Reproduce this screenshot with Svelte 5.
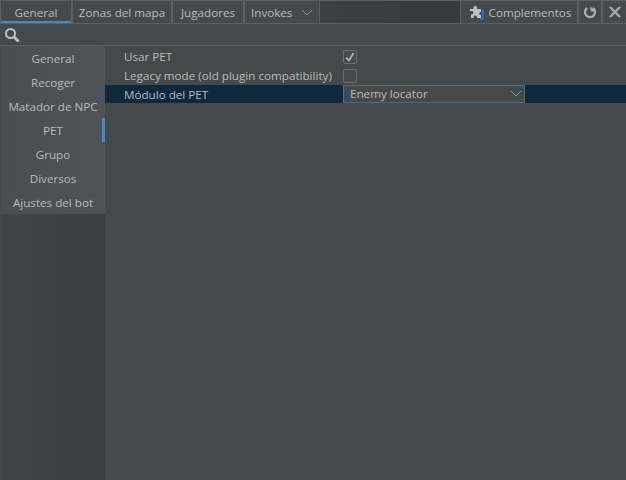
<script>
  const tabs = [
    { label: "General", width: 70, active: true },
    { label: "Zonas del mapa", width: 98 },
    { label: "Jugadores", width: 70 }
  ];
  const menu = ["General", "Recoger", "Matador de NPC", "PET", "Grupo", "Diversos", "Ajustes del bot"];
  const selected = "PET";
</script>

<div class="window">
  <header class="tabbar">
    {#each tabs as tab}
      <div class="tab" class:active={tab.active} style="width: {tab.width}px">{tab.label}</div>
    {/each}
    <div class="tab invokes">
      <span>Invokes</span>
      <svg width="12" height="7" viewBox="0 0 12 7"><path d="M1 1l5 5 5-5" fill="none" stroke="#8f9294" /></svg>
    </div>
    <div class="spacer"></div>
    <div class="tab plugins">
      <svg width="14" height="16" viewBox="0 0 14 16">
        <path d="M0 5h3.500V3.500a1.800 1.800 0 0 1 3.500 0V5h4v3H9.500v3H11v3H7v-1a1.800 1.800 0 0 0-3.500 0v1H1v-3.500h1a1.800 1.800 0 0 0 0-3.500H0z" fill="#bfc1c2" />
        <rect x="12" y="6" width="2" height="7" fill="#0a7cf0" />
        <rect x="10" y="14" width="4" height="2" fill="#0a7cf0" />
      </svg>
      <span>Complementos</span>
    </div>
    <div class="tab action refresh">
      <svg width="14" height="14" viewBox="0 0 14 14">
        <path d="M4.200 3a5 5 0 1 0 5.600 0" fill="none" stroke="#a9acad" stroke-width="2.300" />
        <path d="M7.500 1.500v5H12.500z" fill="#a9acad" />
      </svg>
    </div>
    <div class="tab action close">
      <svg width="12" height="12" viewBox="0 0 12 12"><path d="M1 1l10 10M11 1L1 11" stroke="#a9acad" stroke-width="2.200" /></svg>
    </div>
  </header>

  <div class="search">
    <svg width="16" height="16" viewBox="0 0 16 16">
      <circle cx="6.500" cy="6.500" r="4.500" fill="none" stroke="#bfc2c3" stroke-width="2" />
      <path d="M9.800 9.800l4.800 4.800" stroke="#bfc2c3" stroke-width="2.800" />
    </svg>
  </div>

  <div class="body">
    <nav class="sidebar">
      <ul>
        {#each menu as item}
          <li class:selected={item === selected}>{item}</li>
        {/each}
      </ul>
    </nav>

    <main class="settings">
      <div class="row">
        <span class="name">Usar PET</span>
        <span class="check">
          <svg width="12" height="12" viewBox="0 0 12 12"><path d="M2 6.500l3 3 4.500-7.500" fill="none" stroke="#a6a9aa" stroke-width="2" /></svg>
        </span>
      </div>
      <div class="row">
        <span class="name">Legacy mode (old plugin compatibility)</span>
        <span class="check"></span>
      </div>
      <div class="row current">
        <span class="name">Módulo del PET</span>
        <div class="combo">
          <span>Enemy locator</span>
          <svg width="12" height="7" viewBox="0 0 12 7"><path d="M1 1l5 5 5-5" fill="none" stroke="#8f9294" /></svg>
        </div>
      </div>
    </main>
  </div>
</div>

<style>
  :global(body) {
    background: #45494a;
  }

  .window {
    width: 626px;
    height: 480px;
    display: flex;
    flex-direction: column;
    overflow: hidden;
    background: #45494a;
    color: #bbbbbb;
    font-family: "Open Sans", "Noto Sans", sans-serif;
    font-size: 11.65px;
  }

  .tabbar {
    height: 24px;
    flex: none;
    display: flex;
    gap: 2px;
    box-sizing: border-box;
    background: #5e6060;
    padding: 1px 0 0 1px;
    border-bottom: 1px solid #5e6060;
  }

  .tab {
    box-sizing: border-box;
    height: 22px;
    display: flex;
    align-items: center;
    justify-content: center;
    background: #46494b;
  }

  .tab.active {
    box-shadow: inset 0 -2px 0 #4a88c7;
  }

  .invokes {
    width: 74px;
    justify-content: space-between;
    padding: 0 6px;
  }

  .spacer {
    flex: 1;
    margin: 0 -1px;
    background: linear-gradient(90deg, #3c3f41, #383b3c);
  }

  .plugins {
    width: 116px;
    gap: 5px;
    padding-left: 3px;
  }

  .action {
    width: 22px;
  }

  .close {
    width: 23px;
  }

  .search {
    height: 22px;
    flex: none;
    box-sizing: border-box;
    display: flex;
    align-items: center;
    padding-left: 4px;
    background: #46494b;
    border-bottom: 1px solid #5e6060;
  }

  .body {
    flex: 1;
    display: flex;
    min-height: 0;
  }

  .sidebar {
    width: 104px;
    margin-left: 1px;
    background: linear-gradient(90deg, #414445, #3c3f41);
  }

  .sidebar ul {
    list-style: none;
    margin: 0;
    padding: 0;
    background: linear-gradient(90deg, #4b4e50, #505355);
  }

  .sidebar li {
    height: 24px;
    display: flex;
    align-items: center;
    justify-content: center;
    white-space: nowrap;
  }

  .sidebar li.selected {
    box-shadow: inset -3px 0 0 #4a88c7;
  }

  .settings {
    flex: 1;
    padding-top: 1px;
  }

  .row {
    height: 19px;
    display: flex;
    align-items: center;
    padding-left: 19px;
  }

  .row.current {
    background: #0d293e;
    height: 18px;
  }

  .name {
    width: 219px;
    flex: none;
    white-space: nowrap;
  }

  .check {
    width: 14px;
    height: 14px;
    box-sizing: border-box;
    display: flex;
    align-items: center;
    justify-content: center;
    border: 1px solid #6b6e6f;
    border-radius: 2px;
    background: #45494a;
  }

  .combo {
    width: 182px;
    height: 18px;
    box-sizing: border-box;
    display: flex;
    align-items: center;
    justify-content: space-between;
    padding: 0 2px 1px 6px;
    background: #45494a;
    border: 1px solid #466d94;
  }
</style>
